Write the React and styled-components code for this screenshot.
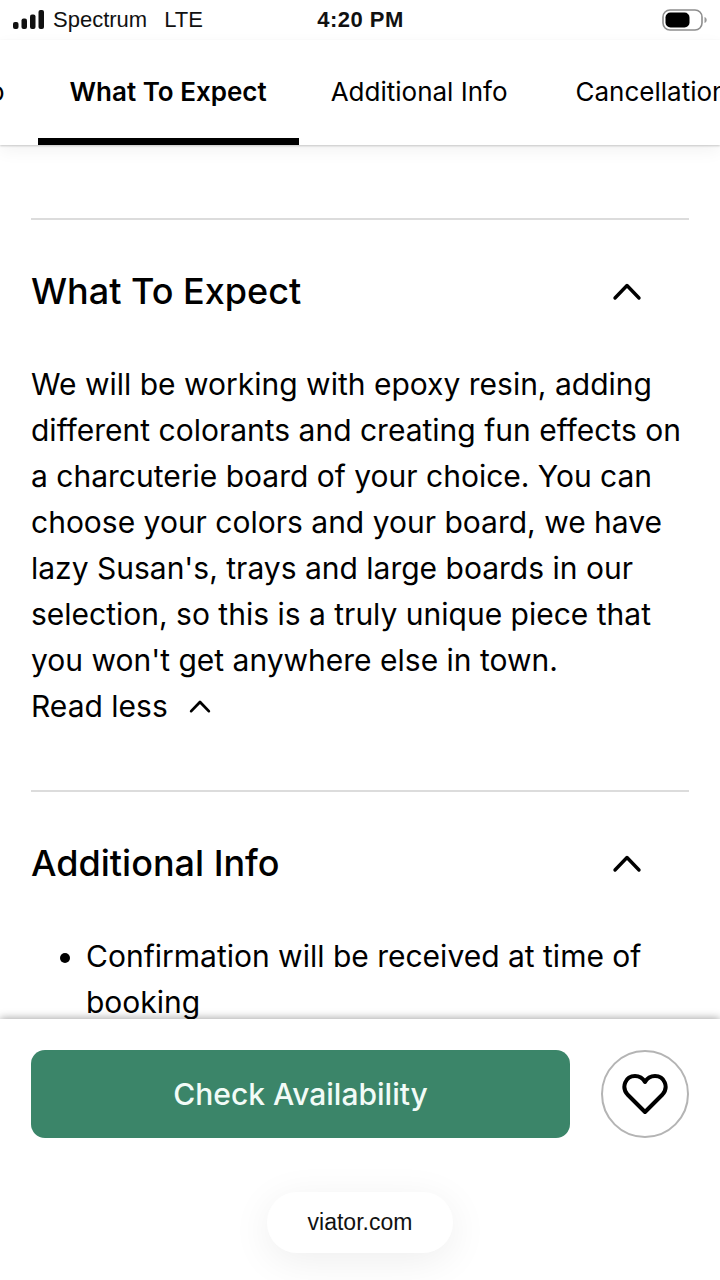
import React from "react";
import styled, { createGlobalStyle } from "styled-components";

const Global = createGlobalStyle`
  html, body { margin: 0; padding: 0; background: #fff; }
  body { font-family: Inter, "Liberation Sans", sans-serif; color: #000; }
`;

const Page = styled.div`
  width: 720px;
  height: 1280px;
  display: flex;
  flex-direction: column;
  overflow: hidden;
  background: #fff;
`;

const StatusBar = styled.div`
  height: 40px;
  flex: none;
  display: grid;
  grid-template-columns: 1fr auto 1fr;
  align-items: center;
  padding: 0 12px 0 13px;
  font-family: "Liberation Sans", sans-serif;
  font-size: 22px;
  color: #111;
`;

const StatusLeft = styled.div`
  display: flex;
  align-items: center;
  gap: 8px;
`;

const Carrier = styled.span`
  margin-right: 9px;
`;

const Clock = styled.span`
  font-weight: 700;
  letter-spacing: 0.5px;
`;

const StatusRight = styled.div`
  display: flex;
  justify-content: flex-end;
`;

const TabBar = styled.nav`
  height: 105px;
  flex: none;
  display: flex;
  overflow: hidden;
  background: #fff;
  box-shadow: 0 1px 2px rgba(0, 0, 0, 0.2), 0 6px 16px rgba(0, 0, 0, 0.05);
  position: relative;
  z-index: 2;
`;

const Tab = styled.div`
  flex: none;
  height: 105px;
  box-sizing: border-box;
  padding: 32px ${(p) => p.$pad}px 0;
  margin-left: ${(p) => p.$offset || 0}px;
  font-size: 26px;
  line-height: 40px;
  font-weight: ${(p) => (p.$active ? 600 : 400)};
  border-bottom: 7px solid ${(p) => (p.$active ? "#000" : "transparent")};
  white-space: nowrap;
`;

const Content = styled.main`
  flex: 1;
  min-height: 0;
  overflow: hidden;
  padding: 73px 31px 0;
`;

const Section = styled.section`
  border-top: 2px solid #dcdcdc;
  padding-bottom: ${(p) => p.$bottom || 0}px;
`;

const SectionHead = styled.div`
  height: 141px;
  display: flex;
  align-items: center;
  justify-content: space-between;
  padding-right: 47px;
  box-sizing: border-box;
`;

const Heading = styled.h2`
  margin: 0;
  font-size: 36px;
  font-weight: 500;
  letter-spacing: 0;
`;

const Body = styled.p`
  margin: 0;
  font-size: 30px;
  line-height: 46px;
`;

const ReadLess = styled.div`
  display: flex;
  align-items: center;
  gap: 21px;
  font-size: 30px;
  line-height: 46px;
`;

const List = styled.ul`
  margin: 0;
  padding: 0 0 0 55px;
  font-size: 30px;
  line-height: 46px;
`;

const BottomBar = styled.div`
  height: 261px;
  flex: none;
  box-sizing: border-box;
  padding-top: 31px;
  background: #fff;
  position: relative;
  z-index: 2;
  box-shadow: 0 -1px 8px rgba(0, 0, 0, 0.35);
  display: flex;
  flex-direction: column;
  align-items: center;
`;

const Actions = styled.div`
  width: 100%;
  box-sizing: border-box;
  padding: 0 31px;
  display: flex;
  gap: 31px;
`;

const CheckButton = styled.button`
  flex: 1;
  height: 88px;
  border: 0;
  border-radius: 14px;
  background: #3b8569;
  color: #f2fbf7;
  font-family: inherit;
  font-size: 30px;
  font-weight: 500;
`;

const HeartButton = styled.button`
  width: 88px;
  height: 88px;
  flex: none;
  padding: 0;
  border: 2px solid #b4b4b4;
  border-radius: 50%;
  background: #fff;
  display: flex;
  align-items: center;
  justify-content: center;
`;

const UrlPill = styled.div`
  margin-top: 54px;
  width: 186px;
  height: 61px;
  border-radius: 30px;
  background: #fff;
  box-shadow: 0 8px 40px rgba(0, 0, 0, 0.07);
  display: flex;
  align-items: center;
  justify-content: center;
  font-family: "Liberation Sans", sans-serif;
  font-size: 23px;
  color: #111;
`;

const Chevron = ({ size = 30, width = 3.4 }) => (
  <svg width={size} height={size} viewBox="0 0 30 30" fill="none" stroke="#000" strokeWidth={width} strokeLinecap="round" strokeLinejoin="round">
    <path d="M3 22 15 9.5 27 22" />
  </svg>
);

const Signal = () => (
  <svg width="32" height="20" viewBox="0 0 32 20" fill="#111">
    <rect x="0" y="12" width="5.5" height="7" rx="2" />
    <rect x="8.5" y="8.500" width="5.5" height="10.500" rx="2" />
    <rect x="17" y="4.500" width="5.500" height="14.500" rx="2" />
    <rect x="25.500" y="0" width="5.500" height="19" rx="2" />
  </svg>
);

const Battery = () => (
  <svg width="46" height="24" viewBox="0 0 46 24">
    <rect x="1" y="2" width="39" height="20" rx="7" fill="#fff" stroke="#8d8d8d" strokeWidth="1.600" />
    <rect x="3.500" y="4.500" width="24" height="15" rx="5" fill="#000" />
    <path d="M42.500 9v6c1.500-.6 2.200-1.700 2.200-3s-.7-2.400-2.200-3Z" fill="#999" />
  </svg>
);

const Heart = () => (
  <svg width="46" height="42" viewBox="0 0 46 42" fill="none" stroke="#000" strokeWidth="4" strokeLinejoin="round">
    <path d="M23 39 5.500 21.500C-1 14 3.500 3 13 3c4.500 0 8 2.500 10 6 2-3.500 5.500-6 10-6 9.500 0 14 11 7.500 18.500Z" />
  </svg>
);

export default function App() {
  return (
    <Page>
      <Global />
      <StatusBar>
        <StatusLeft>
          <Signal />
          <Carrier>Spectrum</Carrier>
          <span>LTE</span>
        </StatusLeft>
        <Clock>4:20 PM</Clock>
        <StatusRight>
          <Battery />
        </StatusRight>
      </StatusBar>
      <TabBar>
        <Tab $pad={0} $offset={-11}>o</Tab>
        <Tab $pad={32} $offset={33} $active>What To Expect</Tab>
        <Tab $pad={32}>Additional Info</Tab>
        <Tab $pad={36}>Cancellation Policy</Tab>
      </TabBar>
      <Content>
        <Section $bottom={61}>
          <SectionHead>
            <Heading>What To Expect</Heading>
            <Chevron />
          </SectionHead>
          <Body>
            We will be working with epoxy resin, adding different colorants and creating fun effects on a charcuterie board of your choice. You can choose your colors and your board, we have lazy Susan's, trays and large boards in our selection, so this is a truly unique piece that you won't get anywhere else in town.
          </Body>
          <ReadLess>
            Read less
            <Chevron size={22} width={3.800} />
          </ReadLess>
        </Section>
        <Section>
          <SectionHead>
            <Heading>Additional Info</Heading>
            <Chevron />
          </SectionHead>
          <List>
            <li>Confirmation will be received at time of booking</li>
          </List>
        </Section>
      </Content>
      <BottomBar>
        <Actions>
          <CheckButton>Check Availability</CheckButton>
          <HeartButton aria-label="Save">
            <Heart />
          </HeartButton>
        </Actions>
        <UrlPill>viator.com</UrlPill>
      </BottomBar>
    </Page>
  );
}
